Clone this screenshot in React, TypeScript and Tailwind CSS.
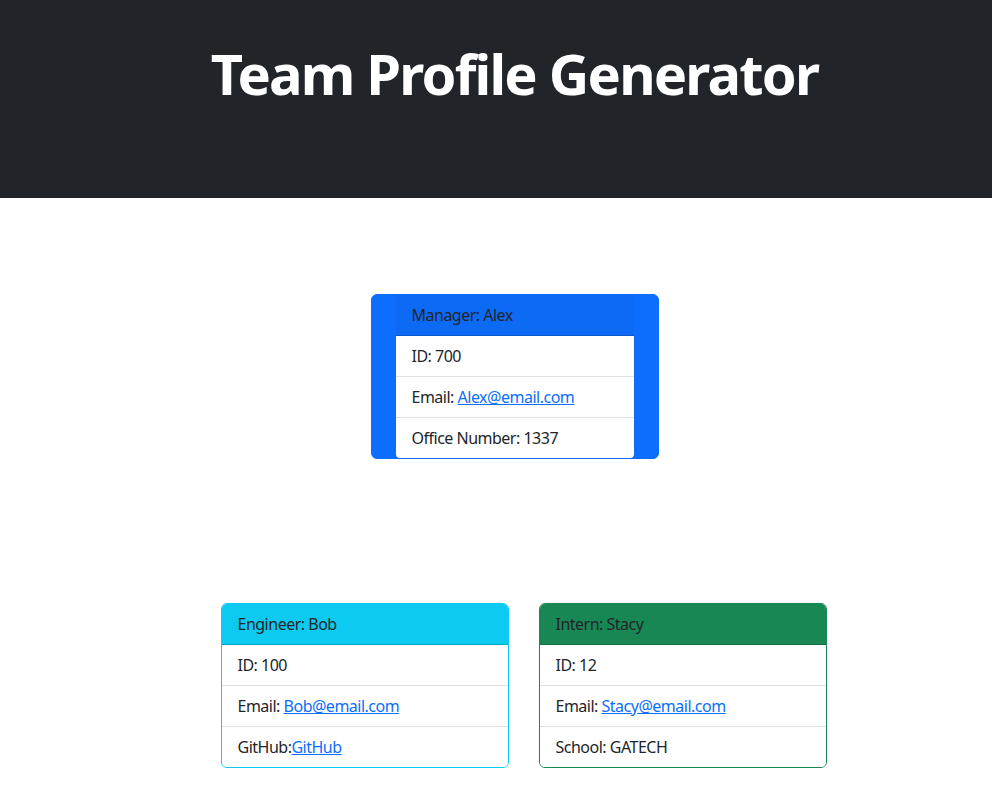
import React from "react";

const font = { fontFamily: '"Noto Sans", "Open Sans", Arial, sans-serif' };

function Item({ children, last }: { children: React.ReactNode; last?: boolean }) {
  return (
    <div
      className={`flex items-center px-4 bg-white text-[16px] tracking-[-0.5px] text-[#212529] ${
        last ? "h-[40px]" : "h-[41px] border-b border-[#dee2e6]"
      }`}
    >
      {children}
    </div>
  );
}

function A({ children }: { children: React.ReactNode }) {
  return <a href="#" className="text-[#0d6efd] underline">{children}</a>;
}

export default function App() {
  return (
    <div className="min-h-[788px] bg-white" style={font}>
      <header className="h-[198px] bg-[#212529] pt-[40px]">
        <h1 className="text-center text-white font-bold text-[56px] leading-[1.2] tracking-[-1.8px] pl-[37px]">
          Team Profile Generator
        </h1>
      </header>

      <div className="flex justify-center pt-[96px] pl-[37px]">
        <div className="w-[288px] rounded-[6px] border border-[#0d6efd] bg-[#0d6efd] px-[24px] overflow-hidden">
          <div className="h-[41px] flex items-center px-4 bg-[rgba(0,0,0,0.03)] text-[16px] tracking-[-0.5px] text-[#212529] border-b border-[rgba(0,0,0,0.175)]">
            Manager: Alex
          </div>
          <div className="rounded-b-[4px] overflow-hidden">
            <Item>ID: 700</Item>
            <Item>
              Email:&nbsp;<A>Alex@email.com</A>
            </Item>
            <Item last>Office Number: 1337</Item>
          </div>
        </div>
      </div>

      <div className="flex justify-center gap-[30px] pt-[144px] pl-[55px]">
        <div className="w-[288px] rounded-[6px] border border-[#0dcaf0] overflow-hidden">
          <div className="h-[41px] flex items-center px-4 bg-[#0dcaf0] text-[16px] tracking-[-0.5px] text-[#212529] border-b border-[rgba(0,0,0,0.175)]">
            Engineer: Bob
          </div>
          <Item>ID: 100</Item>
          <Item>
            Email:&nbsp;<A>Bob@email.com</A>
          </Item>
          <Item last>
            GitHub:<A>GitHub</A>
          </Item>
        </div>
        <div className="w-[288px] rounded-[6px] border border-[#198754] overflow-hidden">
          <div className="h-[41px] flex items-center px-4 bg-[#198754] text-[16px] tracking-[-0.5px] text-[#212529] border-b border-[rgba(0,0,0,0.175)]">
            Intern: Stacy
          </div>
          <Item>ID: 12</Item>
          <Item>
            Email:&nbsp;<A>Stacy@email.com</A>
          </Item>
          <Item last>School: GATECH</Item>
        </div>
      </div>
    </div>
  );
}
